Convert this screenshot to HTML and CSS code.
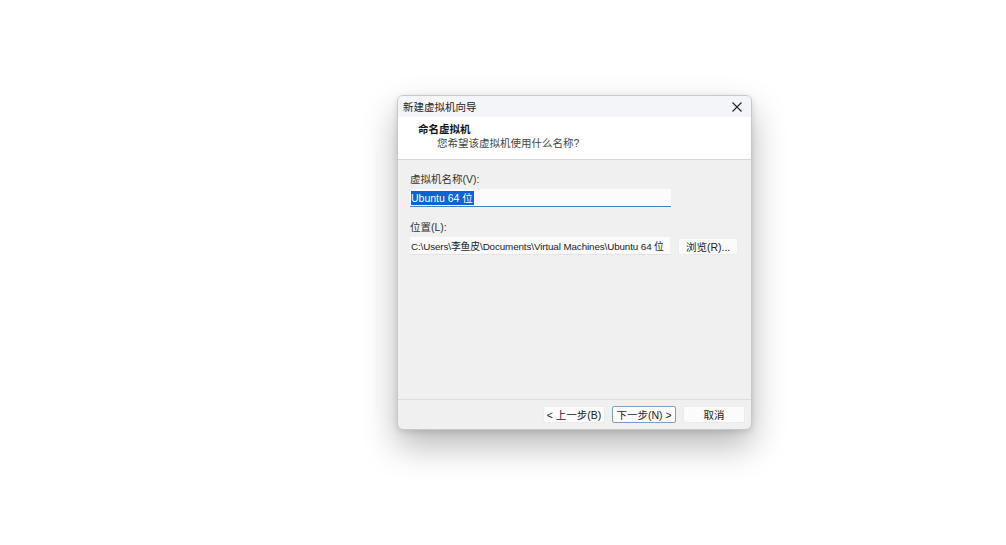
FILE: index.html
```html
<!DOCTYPE html>
<html lang="zh-CN">
<head>
    <meta charset="UTF-8">
    <title>新建虚拟机向导</title>
    <link rel="stylesheet" href="styles.css">
</head>
<body>
    <div class="wizard">
        <!-- タイトルバー -->
        <div class="titlebar">
            <span class="title">新建虚拟机向导</span>
            <span class="close">
                <svg width="10" height="10" viewBox="0 0 10 10"><path d="M0.5 0.5 L9.5 9.5 M9.5 0.5 L0.5 9.5" stroke="#222" stroke-width="1.1" fill="none"/></svg>
            </span>
        </div>

        <!-- ヘッダー -->
        <div class="header">
            <div class="header-title">命名虚拟机</div>
            <div class="header-sub">您希望该虚拟机使用什么名称?</div>
        </div>

        <!-- 入力エリア -->
        <div class="content">
            <label class="field-label">虚拟机名称(V):</label>
            <div class="input name-input"><span class="selected">Ubuntu 64 位</span></div>

            <label class="field-label loc-label">位置(L):</label>
            <div class="row">
                <div class="input path">C:\Users\李鱼皮\Documents\Virtual Machines\Ubuntu 64 位</div>
                <button class="btn browse">浏览(R)...</button>
            </div>
        </div>

        <!-- フッター -->
        <div class="footer">
            <button class="btn">&lt; 上一步(B)</button>
            <button class="btn primary">下一步(N) &gt;</button>
            <button class="btn">取消</button>
        </div>
    </div>
</body>
</html>
```

FILE: styles.css
```css
/* 全体 */
body {
    margin: 0;
    min-height: 545px;
    background: #fff;
    font-family: "Liberation Sans", "Noto Sans CJK SC", sans-serif;
    font-size: 11px;
    color: #1a1a1a;
}

/* ダイアログ本体 */
.wizard {
    width: 355px;
    height: 335px;
    margin: 95px 0 0 397px;
    background: #f0f0f0;
    border: 1px solid #c8c8c8;
    border-radius: 6px;
    box-shadow: 0 16px 34px rgba(0,0,0,0.28), 0 2px 6px rgba(0,0,0,0.12);
    overflow: hidden;
    display: flex;
    flex-direction: column;
    box-sizing: border-box;
}

.titlebar {
    height: 21px;
    flex-shrink: 0;
    background: #f3f5f8;
    display: flex;
    align-items: center;
    justify-content: space-between;
    padding: 0 8px 0 5px;
}
.title {
    font-size: 10.5px;
    color: #222;
}
.close {
    display: flex;
    padding-right: 1px;
}

.header {
    height: 43px;
    flex-shrink: 0;
    background: #fff;
    border-bottom: 1px solid #d8d8d8;
    padding: 5px 0 0 20px;
    box-sizing: border-box;
}
.header-title {
    font-weight: bold;
    font-size: 10.5px;
    line-height: 14px;
    color: #111;
}
.header-sub {
    margin-left: 19px;
    font-size: 10.5px;
    line-height: 14px;
    color: #444;
}

.content {
    flex: 1;
    padding: 12px 13px 0 12px;
    display: flex;
    flex-direction: column;
    border-bottom: 1px solid #dcdcdc;
}
.field-label {
    font-size: 10.5px;
    line-height: 14px;
    color: #333;
}
.loc-label {
    margin-top: 13px;
}

.input {
    width: 261px;
    height: 18px;
    background: #fbfbfb;
    box-sizing: border-box;
    padding: 0 1px;
    display: flex;
    align-items: center;
    font-size: 10.5px;
    white-space: nowrap;
    overflow: hidden;
    border-bottom: 1px solid #e3e3e3;
}
.name-input {
    margin-top: 3px;
    border-bottom: 1px solid #3f7fc6;
}
.path {
    font-size: 9.8px;
    letter-spacing: -0.1px;
}
.selected {
    background: #0a64d6;
    color: #fff;
    line-height: 14px;
    padding: 0 1px 0 0;
}

.row {
    display: flex;
    align-items: center;
    margin-top: 3px;
}

/* ボタン */
.btn {
    font-family: "Liberation Sans", "Noto Sans CJK SC", sans-serif;
    font-size: 10.5px;
    height: 17px;
    padding: 0;
    background: #fbfbfb;
    border: 1px solid #ececec;
    border-radius: 2px;
    color: #222;
    box-sizing: border-box;
    display: flex;
    align-items: center;
    justify-content: center;
}
.browse {
    width: 60px;
    margin-left: 8px;
}

.footer {
    height: 29px;
    flex-shrink: 0;
    display: flex;
    justify-content: flex-end;
    align-items: center;
    gap: 7px;
    padding-right: 6px;
}
.footer .btn {
    width: 62px;
}
.footer .primary {
    width: 64px;
    border: 1px solid #7a9cc6;
    background: #fdfeff;
}
```
